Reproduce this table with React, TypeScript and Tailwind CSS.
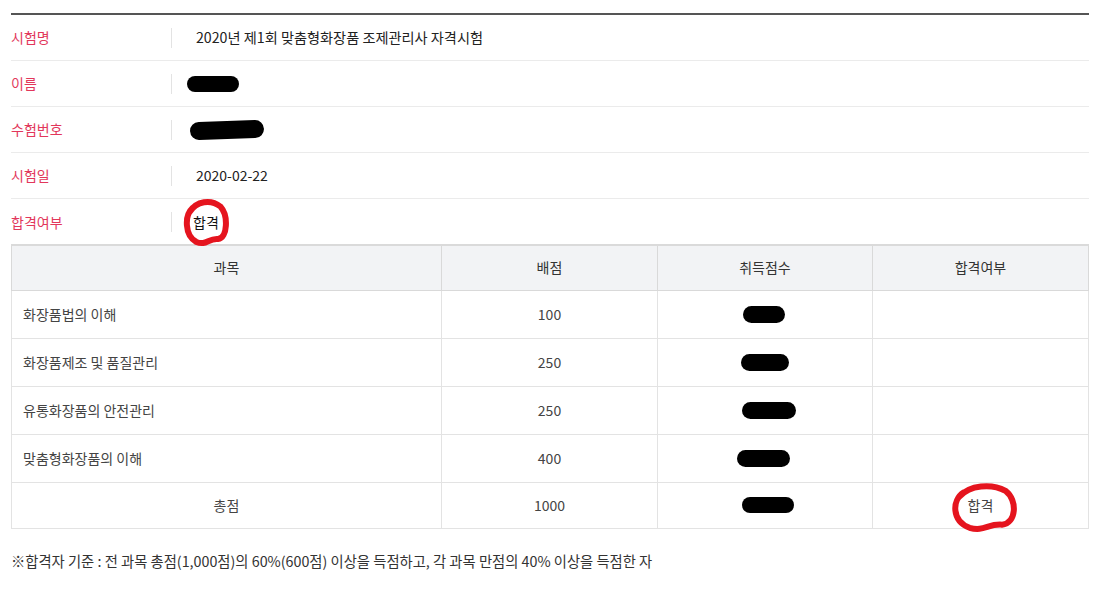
import React from 'react';

const font = { fontFamily: '"Noto Sans CJK KR", "Noto Sans", sans-serif' };

// black marker blob used to hide personal data
const Blob: React.FC<{ w: number; h?: number; className?: string }> = ({ w, h = 17, className }) => (
  <svg width={w} height={h + 4} viewBox={`0 0 ${w} ${h + 4}`} className={className}>
    <rect x={0} y={2} width={w} height={h} rx={h / 2} fill="#000" />
  </svg>
);

// hand drawn red circle around a word
const RedCircle: React.FC<{ w: number; h: number; className: string }> = ({ w, h, className }) => (
  <svg width={w} height={h} viewBox={`0 0 ${w} ${h}`} className={`absolute pointer-events-none ${className}`}>
    <path
      d={`M ${w * 0.22} ${h * 0.2} C ${w * 0.05} ${h * 0.35}, ${w * 0.05} ${h * 0.75}, ${w * 0.3} ${h * 0.88} C ${w * 0.5} ${h * 0.96}, ${w * 0.55} ${h * 0.8}, ${w * 0.75} ${h * 0.82} C ${w * 0.95} ${h * 0.8}, ${w * 0.97} ${h * 0.35}, ${w * 0.8} ${h * 0.17} C ${w * 0.6} ${h * 0.02}, ${w * 0.3} ${h * 0.06}, ${w * 0.16} ${h * 0.28}`}
      fill="none"
      stroke="#e5141e"
      strokeWidth={6}
      strokeLinecap="round"
    />
  </svg>
);

const InfoRow: React.FC<{ label: string; children: React.ReactNode; last?: boolean }> = ({ label, children, last }) => (
  <div className={`flex items-center h-[46px] ${last ? '' : 'border-b border-[#ebebeb]'}`}>
    <div className="w-[160px] shrink-0 text-[14px] text-[#e2375b]">{label}</div>
    <div className="w-px h-[20px] bg-[#e3e3e3]" />
    <div className="pl-[24px] text-[14px] text-[#222] flex items-center">{children}</div>
  </div>
);

const rows = [
  { name: '화장품법의 이해', max: '100', blob: 42, off: 'ml-[85px]' },
  { name: '화장품제조 및 품질관리', max: '250', blob: 48, off: 'ml-[83px]' },
  { name: '유통화장품의 안전관리', max: '250', blob: 54, off: 'ml-[84px]' },
  { name: '맞춤형화장품의 이해', max: '400', blob: 53, off: 'ml-[79px]' },
];

const App: React.FC = () => {
  return (
    <div className="w-[1103px] h-[589px] bg-white px-[11px] pt-[13px]" style={font}>
      <div className="w-[1078px] border-t-2 border-[#555]">
        <InfoRow label="시험명">
          <span className="text-[14.2px]">2020년 제1회 맞춤형화장품 조제관리사 자격시험</span>
        </InfoRow>
        <InfoRow label="이름">
          <Blob w={52} h={16} className="-ml-[9px]" />
        </InfoRow>
        <InfoRow label="수험번호">
          <Blob w={74} h={18} className="-ml-[6px] rotate-[-2deg]" />
        </InfoRow>
        <InfoRow label="시험일">2020-02-22</InfoRow>
        <InfoRow label="합격여부" last>
          <span className="relative -ml-[3px] text-[#111]">
            합격
            <RedCircle w={48} h={50} className="-left-[11px] -top-[14px]" />
          </span>
        </InfoRow>

        <table className="-mt-[1px] w-full border-collapse text-[14px] text-[#444]">
          <thead>
            <tr className="h-[45px] bg-[#f2f3f5] text-[#333]">
              <th className="w-[430px] font-normal border border-[#d9d9d9] border-t-2 border-t-[#dadada]">과목</th>
              <th className="w-[216px] font-normal border border-[#d9d9d9] border-t-2 border-t-[#dadada]">배점</th>
              <th className="w-[215px] font-normal border border-[#d9d9d9] border-t-2 border-t-[#dadada]">취득점수</th>
              <th className="font-normal border border-[#d9d9d9] border-t-2 border-t-[#dadada]">합격여부</th>
            </tr>
          </thead>
          <tbody>
            {rows.map((r) => (
              <tr key={r.name} className="h-[48px]">
                <td className="border border-[#e3e3e3] pl-[11px]">{r.name}</td>
                <td className="border border-[#e3e3e3] text-center">{r.max}</td>
                <td className="border border-[#e3e3e3]">
                  <Blob w={r.blob} className={r.off} />
                </td>
                <td className="border border-[#e3e3e3]" />
              </tr>
            ))}
            <tr className="h-[46px]">
              <td className="border border-[#e3e3e3] text-center">총점</td>
              <td className="border border-[#e3e3e3] text-center">1000</td>
              <td className="border border-[#e3e3e3]">
                <Blob w={52} h={16} className="ml-[84px]" />
              </td>
              <td className="border border-[#e3e3e3] text-center">
                <span className="relative">
                  합격
                  <RedCircle w={72} h={52} className="-left-[20px] -top-[13px]" />
                </span>
              </td>
            </tr>
          </tbody>
        </table>

        <p className="mt-[21px] text-[14.3px] text-[#333]">
          ※합격자 기준 : 전 과목 총점(1,000점)의 60%(600점) 이상을 득점하고, 각 과목 만점의 40% 이상을 득점한 자
        </p>
      </div>
    </div>
  );
};

export default App;
